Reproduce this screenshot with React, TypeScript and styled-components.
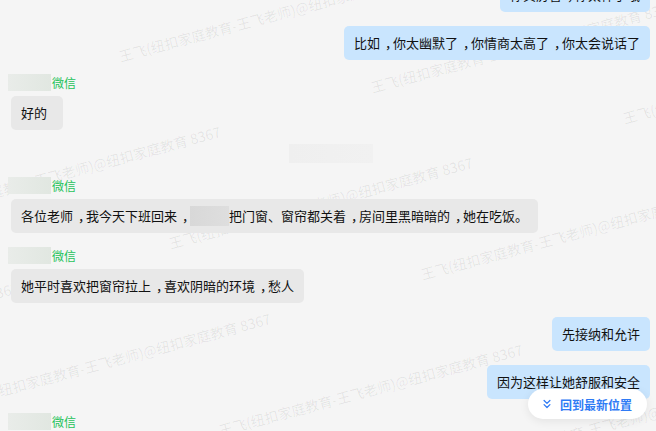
import React from "react";
import styled, { createGlobalStyle } from "styled-components";
import { ChevronsDown } from "lucide-react";

const GlobalStyle = createGlobalStyle`
  html, body { margin: 0; padding: 0; background: #f5f5f5; }
  body {
    font-family: "Noto Sans CJK SC", "Noto Sans", sans-serif;
    -webkit-font-smoothing: antialiased;
  }
`;

const Page = styled.div`
  position: relative;
  width: 656px;
  height: 431px;
  overflow: hidden;
  background: #f5f5f5;
`;

const WatermarkLayer = styled.div`
  position: absolute;
  inset: 0;
  pointer-events: none;
  z-index: 0;
`;

const WatermarkText = styled.span`
  position: absolute;
  white-space: nowrap;
  font-size: 14px;
  line-height: 14px;
  color: rgba(0, 0, 0, 0.075);
  transform-origin: 0 100%;
  transform: rotate(-15deg);
`;

const MessageList = styled.div<{ $offset: number }>`
  position: relative;
  z-index: 1;
  display: flex;
  flex-direction: column;
  gap: 14px;
  margin-top: ${(p) => -p.$offset}px;
  padding: 0 6px 0 11px;
`;

const Row = styled.div<{ $side: "left" | "right" | "center" }>`
  display: flex;
  justify-content: ${(p) =>
    p.$side === "right" ? "flex-end" : p.$side === "center" ? "center" : "flex-start"};
`;

const Group = styled.div`
  display: flex;
  flex-direction: column;
  align-items: flex-start;
`;

const Sender = styled.div`
  display: flex;
  align-items: center;
  height: 17px;
  margin: 0 0 5px -3px;
`;

const NameBlur = styled.div`
  width: 43px;
  height: 17px;
  background: linear-gradient(90deg, #e9ece9 0%, #e1e7e1 100%);
`;

const Source = styled.span`
  margin-left: 1px;
  font-size: 12px;
  line-height: 17px;
  color: #1fc35a;
`;

const Bubble = styled.div<{ $tone: "blue" | "gray" }>`
  box-sizing: border-box;
  min-width: 52px;
  padding: 7px 10px;
  border-radius: 5px;
  font-size: 13px;
  line-height: 20px;
  color: #111;
  white-space: nowrap;
  background: ${(p) => (p.$tone === "blue" ? "#c9e5fe" : "#e8e8e8")};
`;

/* full-width comma drawn centred in its 1em cell */
const Punct = styled.span`
  display: inline-block;
  width: 1em;
  overflow: hidden;
  text-indent: 0.38em;
  vertical-align: top;
`;

const InlineBlur = styled.span`
  display: inline-block;
  width: 39px;
  height: 20px;
  vertical-align: top;
  background: linear-gradient(90deg, #d8d8d8 0%, #dedede 100%);
`;

const CenterBlur = styled.div`
  width: 84px;
  height: 19px;
  background: linear-gradient(90deg, #efefef 0%, #f1f1f1 100%);
`;

const JumpButton = styled.button`
  position: absolute;
  right: 9px;
  bottom: 12px;
  z-index: 2;
  display: flex;
  align-items: center;
  gap: 6px;
  height: 30px;
  padding: 0 15px 0 12px;
  border: none;
  border-radius: 15px;
  background: #ffffff;
  box-shadow: 0 2px 10px rgba(0, 0, 0, 0.08);
  font-family: "Noto Sans CJK SC", sans-serif;
  font-size: 12px;
  font-weight: 700;
  color: #2f7bf5;
  cursor: pointer;
`;

const WATERMARK = "王飞(纽扣家庭教育-王飞老师)@纽扣家庭教育 8367";

const marks: { x: number; y: number }[] = [];
for (let j = -1; j <= 2; j++) {
  for (let i = -2; i <= 2; i++) {
    const x = 121 + i * 252 + j * 50;
    const y = 63 + i * 31 + j * 187;
    if (x < 660 && x + 330 > -10 && y > -20 && y - 100 < 440) marks.push({ x, y });
  }
}

const Text = ({ children }: { children: string }) => (
  <>
    {children.split(/(，)/).map((part, k) =>
      part === "，" ? <Punct key={k}>，</Punct> : <React.Fragment key={k}>{part}</React.Fragment>
    )}
  </>
);

const SenderHeader = () => (
  <Sender>
    <NameBlur />
    <Source>微信</Source>
  </Sender>
);

export default function App() {
  return (
    <Page>
      <GlobalStyle />
      <WatermarkLayer>
        {marks.map((m, k) => (
          <WatermarkText key={k} style={{ left: m.x, top: m.y - 14 }}>
            {WATERMARK}
          </WatermarkText>
        ))}
      </WatermarkLayer>
      <MessageList $offset={22}>
        <Row $side="right">
          <Bubble $tone="blue">
            <Text>你真厉害，你太棒了哦</Text>
          </Bubble>
        </Row>
        <Row $side="right">
          <Bubble $tone="blue">
            <Text>比如，你太幽默了，你情商太高了，你太会说话了</Text>
          </Bubble>
        </Row>
        <Group>
          <SenderHeader />
          <Bubble $tone="gray">好的</Bubble>
        </Group>
        <Row $side="center">
          <CenterBlur />
        </Row>
        <Group>
          <SenderHeader />
          <Bubble $tone="gray">
            <Text>各位老师，我今天下班回来，</Text>
            <InlineBlur />
            <Text>把门窗、窗帘都关着，房间里黑暗暗的，她在吃饭。</Text>
          </Bubble>
        </Group>
        <Group>
          <SenderHeader />
          <Bubble $tone="gray">
            <Text>她平时喜欢把窗帘拉上，喜欢阴暗的环境，愁人</Text>
          </Bubble>
        </Group>
        <Row $side="right">
          <Bubble $tone="blue">先接纳和允许</Bubble>
        </Row>
        <Row $side="right">
          <Bubble $tone="blue">因为这样让她舒服和安全</Bubble>
        </Row>
        <Group>
          <SenderHeader />
          <Bubble $tone="gray">嗯嗯</Bubble>
        </Group>
      </MessageList>
      <JumpButton>
        <ChevronsDown size={14} strokeWidth={2.2} />
        回到最新位置
      </JumpButton>
    </Page>
  );
}
